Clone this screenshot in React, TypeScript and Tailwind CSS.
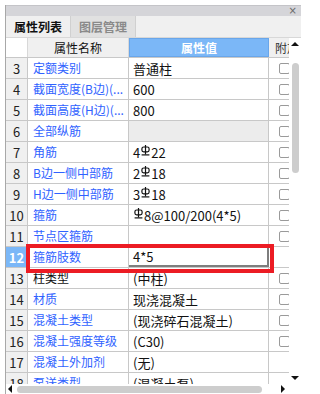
import React from "react";

type Row = {
  n: number;
  name: string;
  value: React.ReactNode;
  black?: boolean;
  box?: boolean;
  group?: boolean;
};

// steel grade mark (HRB400) drawn as a small glyph
const Rebar = () => (
  <svg width="9" height="11" viewBox="0 0 9 11" className="inline-block mx-[1px] -translate-y-[2px]">
    <rect x="0.9" y="2" width="7.2" height="4.8" rx="1.8" fill="none" stroke="#111" strokeWidth="1.2" />
    <line x1="4.5" y1="0" x2="4.5" y2="9.4" stroke="#111" strokeWidth="1.2" />
    <line x1="0.6" y1="9.9" x2="8.4" y2="9.9" stroke="#111" strokeWidth="1.2" />
  </svg>
);

const rows: Row[] = [
  { n: 3, name: "定额类别", value: "普通柱", box: true },
  { n: 4, name: "截面宽度(B边)(...", value: "600", box: true },
  { n: 5, name: "截面高度(H边)(...", value: "800", box: true },
  { n: 6, name: "全部纵筋", value: "", box: true, group: true },
  { n: 7, name: "角筋", value: <>4<Rebar />22</>, box: true },
  { n: 8, name: "B边一侧中部筋", value: <>2<Rebar />18</>, box: true },
  { n: 9, name: "H边一侧中部筋", value: <>3<Rebar />18</>, box: true },
  { n: 10, name: "箍筋", value: <><Rebar />8@100/200(4*5)</>, box: true },
  { n: 11, name: "节点区箍筋", value: "", box: true },
  { n: 12, name: "箍筋肢数", value: "4*5" },
  { n: 13, name: "柱类型", value: "(中柱)", black: true, box: true },
  { n: 14, name: "材质", value: "现浇混凝土", box: true },
  { n: 15, name: "混凝土类型", value: "(现浇碎石混凝土)", box: true },
  { n: 16, name: "混凝土强度等级", value: "(C30)", box: true },
  { n: 17, name: "混凝土外加剂", value: "(无)" },
  { n: 18, name: "泵送类型", value: "(混凝土泵)" },
];

const App = () => {
  return (
    <div className="relative w-[301px] h-[394px] bg-white overflow-hidden pt-[5px] pl-[5px] font-['Noto_Sans_CJK_SC','Microsoft_YaHei',sans-serif] text-[12px] leading-none text-[#111]">
      <div className="flex flex-col h-full border-l border-[#a8a8a8]">
        {/* title bar */}
        <div className="h-[11px] bg-[#d5d5d9] border-t border-[#c4c4c8] flex items-center justify-end pr-[4px]">
          <span className="text-[10px] leading-none text-[#6a6a6a] font-['DejaVu_Sans',sans-serif]">×</span>
        </div>

        {/* tabs */}
        <div className="h-[22px] flex bg-[#f0f0f0] border-b border-[#d8d8d8]">
          <div className="w-[65px] flex items-center justify-center font-bold text-[12px] text-[#111] border-r border-[#d0d0d0]">
            属性列表
          </div>
          <div className="w-[65px] flex items-center justify-center font-bold text-[12px] text-[#8a8a8a] bg-[#e1e1e1] border-r border-[#d0d0d0]">
            图层管理
          </div>
          <div className="flex-1" />
        </div>

        {/* body */}
        <div className="flex flex-1 min-h-0">
          <div className="w-[283px] shrink-0 overflow-hidden">
            <div className="w-[300px]">
              {/* header */}
              <div className="h-[20px] flex border-b border-[#c8c8c8]">
                <div className="w-[22px] shrink-0 bg-white border-r border-[#d8d8d8]" />
                <div className="w-[101px] shrink-0 bg-[#f0f0f0] flex items-center justify-center border-r border-[#d8d8d8]">
                  属性名称
                </div>
                <div className="w-[140px] shrink-0 bg-[#7bb7f7] flex items-center justify-center text-white font-semibold border border-[#69a6ea]">
                  属性值
                </div>
                <div className="w-[37px] shrink-0 bg-[#f0f0f0] flex items-center pl-[6px] text-[#333]">
                  附加
                </div>
              </div>

              {rows.map((r) => {
                const editing = r.n === 12;
                return (
                  <div key={r.n} className="h-[21px] flex border-b border-[#c8c8c8]">
                    <div
                      className={
                        editing
                          ? "w-[22px] shrink-0 bg-[#7bb7f7] text-white font-bold flex items-center justify-center text-[13px] border-r border-[#c8c8c8]"
                          : "w-[22px] shrink-0 bg-[#f0f0f0] flex items-center justify-center text-[13px] text-[#222] border-r border-[#c8c8c8]"
                      }
                    >
                      {r.n}
                    </div>
                    <div
                      className={
                        r.black
                          ? "w-[101px] shrink-0 flex items-center pl-[5px] text-[#111] border-r border-[#c8c8c8] whitespace-nowrap"
                          : "w-[101px] shrink-0 flex items-center pl-[5px] text-[#2f62ff] border-r border-[#c8c8c8] whitespace-nowrap"
                      }
                    >
                      {r.name}
                    </div>
                    <div
                      className={
                        editing
                          ? "w-[140px] shrink-0 flex items-center pl-[4px] bg-white border-r-2 border-b-2 border-[#7e7e7e] whitespace-nowrap text-[13px]"
                          : r.group
                          ? "w-[140px] shrink-0 flex items-center pl-[4px] bg-[#ececec] border-r border-[#c8c8c8] whitespace-nowrap"
                          : "w-[140px] shrink-0 flex items-center pl-[4px] border-r border-[#c8c8c8] whitespace-nowrap text-[13px]"
                      }
                    >
                      {r.value}
                    </div>
                    <div className="w-[37px] shrink-0 flex items-center pl-[10px]">
                      {r.box && (
                        <div className="w-[11px] h-[11px] bg-white border border-[#9a9a9a] rounded-[2px]" />
                      )}
                    </div>
                  </div>
                );
              })}
            </div>
          </div>

          {/* vertical scrollbar */}
          <div className="w-[12px] shrink-0 bg-white flex flex-col items-center pt-[4px] pb-[4px]">
            <div className="w-0 h-0 border-l-[4px] border-r-[4px] border-b-[4px] border-l-transparent border-r-transparent border-b-[#111]" />
            <div className="mt-[17px] w-[7px] h-[110px] rounded-full bg-[#cdcdcd]" />
            <div className="flex-1" />
            <div className="w-0 h-0 border-l-[4px] border-r-[4px] border-t-[4px] border-l-transparent border-r-transparent border-t-[#111]" />
          </div>
        </div>

        {/* horizontal scrollbar */}
        <div className="h-[10px] shrink-0 bg-white flex items-center pl-[2px]">
          <div className="w-0 h-0 border-t-[4px] border-b-[4px] border-r-[4px] border-t-transparent border-b-transparent border-r-[#111]" />
          <div className="ml-[5px] w-[245px] h-[7px] rounded-full bg-[#cdcdcd]" />
          <div className="ml-[19px] w-0 h-0 border-t-[4px] border-b-[4px] border-l-[4px] border-t-transparent border-b-transparent border-l-[#111]" />
        </div>
      </div>

      {/* red annotation box */}
      <div className="absolute left-[26px] top-[244px] w-[248px] h-[29px] border-[4px] border-[#ec1c24] pointer-events-none" />
    </div>
  );
};

export default App;
